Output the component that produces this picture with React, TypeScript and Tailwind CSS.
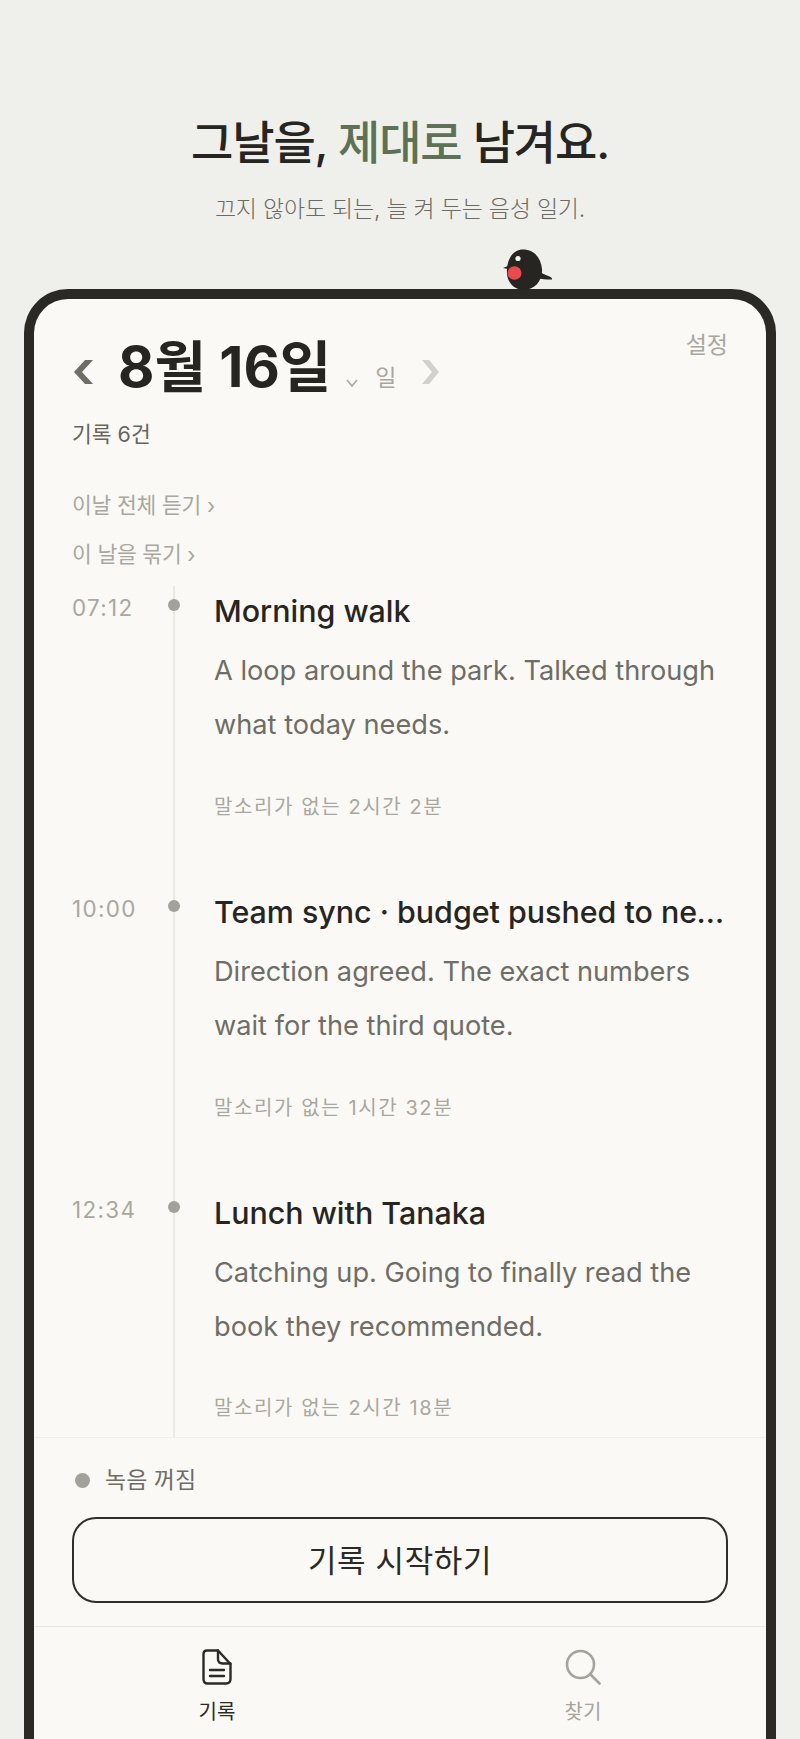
const fontStack = { fontFamily: 'Inter, "Noto Sans CJK KR", sans-serif' };

const entries = [
  {
    time: '07:12',
    title: 'Morning walk',
    body: 'A loop around the park. Talked through what today needs.',
    meta: '말소리가 없는 2시간 2분',
  },
  {
    time: '10:00',
    title: 'Team sync · budget pushed to next quarter',
    body: 'Direction agreed. The exact numbers wait for the third quote.',
    meta: '말소리가 없는 1시간 32분',
  },
  {
    time: '12:34',
    title: 'Lunch with Tanaka',
    body: 'Catching up. Going to finally read the book they recommended.',
    meta: '말소리가 없는 2시간 18분',
  },
];

function Bird() {
  return (
    <svg className="absolute left-[469px] top-[-50px]" width="52" height="42" viewBox="0 0 52 42">
      {/* tail */}
      <path d="M34 22 L44 26.5 Q50 28.5 49 30.5 Q44 31 33 29 Z" fill="#262521" />
      {/* beak */}
      <path d="M6 16.5 L0 19 L7 20.5 Z" fill="#262521" />
      {/* body */}
      <path d="M20 0.5 C32 0.5 38 10 39 20 C40 31 32 41 21 41 C11 41 5 34 4 25 C3 12 9 0.5 20 0.5 Z" fill="#262521" />
      <circle cx="15" cy="9.5" r="2.6" fill="#f8f7f3" />
      <ellipse cx="11.5" cy="24" rx="7" ry="6.8" fill="#ea4a4c" />
    </svg>
  );
}

function DocIcon() {
  return (
    <svg width="30" height="36" viewBox="0 0 30 36" fill="none" stroke="#2b2a26" strokeWidth="2.4" strokeLinejoin="round" strokeLinecap="round">
      <path d="M5 1.5 H16 L28.5 15 V30 Q28.5 34.5 24 34.5 H5.5 Q1.5 34.5 1.5 30 V5 Q1.5 1.5 5 1.5 Z" />
      <path d="M16 1.5 V10 Q16 14.5 20.5 14.5 H28.5" />
      <path d="M8 21 H22" />
      <path d="M8 27 H22" />
    </svg>
  );
}

function SearchIcon() {
  return (
    <svg width="36" height="36" viewBox="0 0 36 36" fill="none" stroke="#a5a49c" strokeWidth="2.6" strokeLinecap="round">
      <circle cx="15.5" cy="15.5" r="13.5" />
      <path d="M25.5 25.5 L34.5 34.5" />
    </svg>
  );
}

export default function App() {
  return (
    <div className="h-[1739px] overflow-hidden bg-[#eff0eb] flex flex-col" style={fontStack}>
      {/* Hero */}
      <header className="pt-[108px] text-center">
        <h1 className="text-[46px] leading-[68px] font-medium tracking-[-0.025em] text-[#262521]">
          그날을, <span className="text-[#5c7155]">제대로</span> 남겨요.
        </h1>
        <p className="mt-[16px] text-[23px] leading-[34px] font-light tracking-[-0.01em] text-[#6b6a63]">
          끄지 않아도 되는, 늘 켜 두는 음성 일기.
        </p>
      </header>

      {/* Phone frame */}
      <div className="relative mx-[24px] mt-[63px] flex-1 min-h-0 flex flex-col rounded-t-[44px] border-[10px] border-b-0 border-[#2a2924] bg-[#faf9f5]">
        <Bird />

        <div className="px-[38px] pt-[30px]">
          <div className="flex">
            <div className="flex items-center pt-[2px]">
              <svg width="20" height="24" viewBox="0 0 20 24" className="ml-[2px] mt-[9px]">
                <path d="M19 0 L8 12 L19 24 H11 L0 12 L11 0 Z" fill="#6e6d66" />
              </svg>
              <span className="ml-[24px] text-[56px] leading-[72px] font-bold text-[#262521]">8월 16일</span>
              <span className="ml-[15px] mt-[31px]">
                <svg width="12" height="8" viewBox="0 0 12 8" fill="none" stroke="#a8a79f" strokeWidth="1.6">
                  <path d="M1 1 L6 7 L11 1" />
                </svg>
              </span>
              <span className="ml-[17px] mt-[22px] text-[23px] text-[#a8a79f]">일</span>
              <svg width="17" height="24" viewBox="0 0 17 24" className="ml-[26px] mt-[9px]">
                <path d="M0 0 L7 0 L17 12 L7 24 H0 L10 12 Z" fill="#d2d1cb" />
              </svg>
            </div>
            <span className="ml-auto text-[23px] leading-[32px] text-[#a8a79f]">설정</span>
          </div>

          <p className="mt-[15px] text-[21.5px] leading-[32px] text-[#66655e]">기록 6건</p>
          <div className="mt-[39px] flex flex-col gap-[17px] text-[21.5px] leading-[32px] tracking-[-0.01em] text-[#a9a89f]">
            <span>이날 전체 듣기 ›</span>
            <span>이 날을 묶기 ›</span>
          </div>
        </div>

        {/* Timeline */}
        <div className="mt-[16px] flex-1 min-h-0 overflow-hidden px-[38px]">
          {entries.map((entry) => (
            <div key={entry.time} className="flex">
              <div className="w-[101px] shrink-0 pt-[7px] text-[22.4px] leading-[30px] tracking-[0.06em] text-[#a9a89f]">{entry.time}</div>
              <div className="relative w-[41px] shrink-0 border-l-2 border-[#ebe9e2]">
                <div className="absolute left-[-7px] top-[13px] h-[12px] w-[12px] rounded-full bg-[#a3a29a]" />
              </div>
              <div className="min-w-0 flex-1 pt-[4px] pb-[65px]">
                <h2 className="truncate text-[30.4px] leading-[42px] font-medium text-[#262521]">{entry.title}</h2>
                <p className="mt-[12px] text-[27.2px] leading-[54.4px] text-[#6e6d66]">{entry.body}</p>
                <p className="mt-[39px] text-[20px] leading-[30px] tracking-[0.08em] text-[#a9a89f]">{entry.meta}</p>
              </div>
            </div>
          ))}
        </div>

        {/* Recorder */}
        <div className="border-t border-[#efeee8] px-[38px] pt-[25px] pb-[23px]">
          <div className="flex items-center gap-[15px] pl-[3px]">
            <span className="h-[15px] w-[15px] rounded-full bg-[#a3a29a]" />
            <span className="text-[23px] leading-[34px] text-[#6e6d66]">녹음 꺼짐</span>
          </div>
          <button className="mt-[20px] flex h-[86px] w-full items-center justify-center rounded-[24px] border-2 border-[#2f2e29] pt-[2px] text-[31px] tracking-[0.02em] text-[#2b2a26]">
            기록 시작하기
          </button>
        </div>

        {/* Tabs */}
        <nav className="grid grid-cols-2 border-t border-[#e9e8e2] pt-[22px] pb-[12px]">
          <div className="flex flex-col items-center">
            <DocIcon />
            <span className="mt-[12px] text-[20px] leading-[30px] text-[#2b2a26]">기록</span>
          </div>
          <div className="flex flex-col items-center">
            <SearchIcon />
            <span className="mt-[12px] text-[20px] leading-[30px] text-[#a5a49c]">찾기</span>
          </div>
        </nav>
      </div>
    </div>
  );
}
